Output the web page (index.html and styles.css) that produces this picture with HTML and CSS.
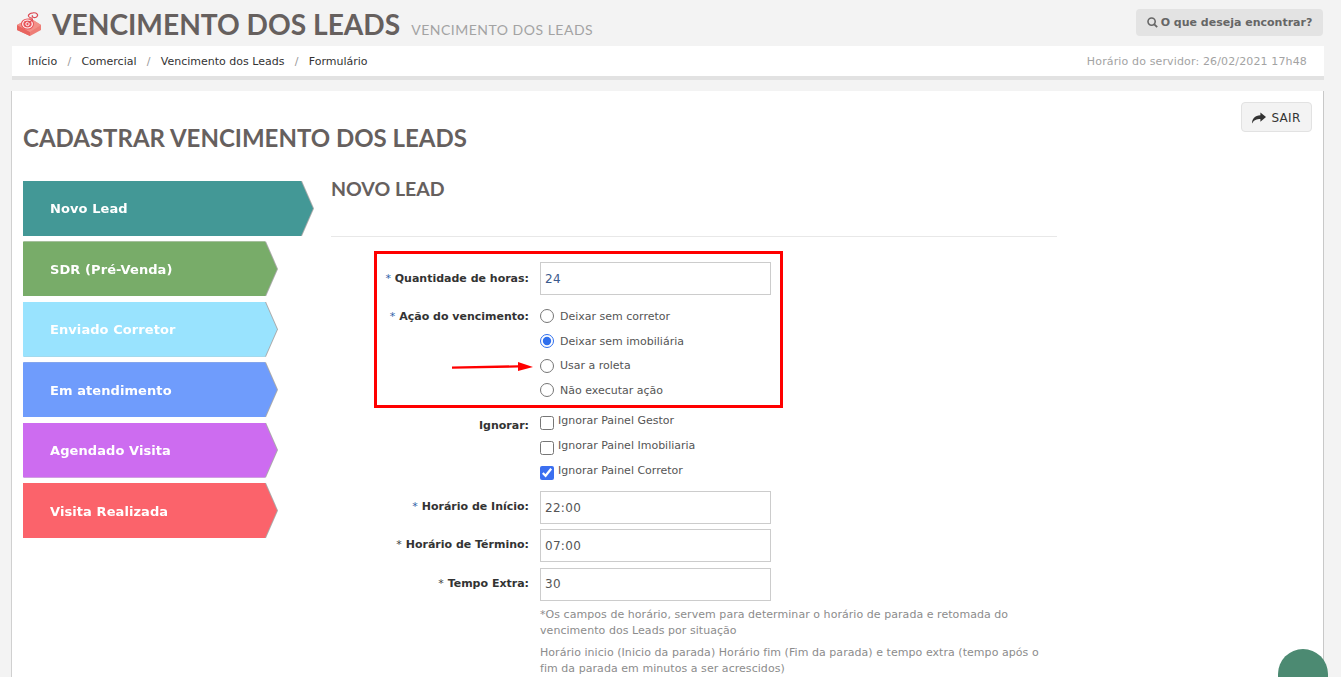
FILE: index.html
```html
<!DOCTYPE html>
<html lang="pt-BR">
<head>
<meta charset="utf-8">
<title>Vencimento dos Leads</title>
<link rel="stylesheet" href="styles.css">
</head>
<body>
<header class="top">
  <div class="title">
    <svg class="logo" width="24" height="24" viewBox="0 0 24 24">
      <path d="M0 13 L13 6 L24 13 L24 18 L13 24 L0 18 Z" fill="#ee7d76"/>
      <path d="M0 13 L13 20 L13 24 L0 18 Z" fill="#e8645f"/>
      <path d="M0 13 L13 6 L24 13 L13 20 Z" fill="#f29088"/>
      <ellipse cx="10.5" cy="12" rx="6.5" ry="5.6" fill="#e9545a"/>
      <ellipse cx="10.5" cy="12" rx="4.8" ry="4" fill="none" stroke="#fff" stroke-width="1.2"/>
      <circle cx="10.5" cy="12" r="1.7" fill="none" stroke="#fff" stroke-width="1"/>
      <path d="M11 10 C17 9 16 6 13 5.5 C10 4.5 11.5 1 16 .8 C20 .5 22 3 19.5 5 C17 6.4 14.5 5 15.5 3.2" fill="none" stroke="#dc4a54" stroke-width="1.2"/>
    </svg>
    <h1>VENCIMENTO DOS LEADS</h1>
    <span class="subtitle">VENCIMENTO DOS LEADS</span>
  </div>
  <button class="search" type="button">
    <svg width="11" height="11" viewBox="0 0 11 11"><circle cx="4.6" cy="4.6" r="3.6" fill="none" stroke="#666" stroke-width="1.6"/><path d="M7.3 7.3 L10.2 10.2" stroke="#666" stroke-width="1.8"/></svg>
    O que deseja encontrar?
  </button>
</header>

<nav class="crumbs">
  <ol>
    <li>Início</li><li class="sep">/</li><li>Comercial</li><li class="sep">/</li><li>Vencimento dos Leads</li><li class="sep">/</li><li>Formulário</li>
  </ol>
  <span class="clock">Horário do servidor: 26/02/2021 17h48</span>
</nav>

<main class="card">
  <button class="exit" type="button">
    <svg width="14" height="12" viewBox="0 0 15 12"><path d="M9 0 L15 5 L9 10 L9 7 C5 7 2 8 0 12 C0 7 3 3 9 3 Z" fill="#333"/></svg>
    SAIR
  </button>
  <h2>CADASTRAR VENCIMENTO DOS LEADS</h2>
  <div class="columns">
    <ul class="steps">
      <li class="step first c1"><span>Novo Lead</span></li>
      <li class="step c2"><span>SDR (Pré-Venda)</span></li>
      <li class="step c3"><span>Enviado Corretor</span></li>
      <li class="step c4"><span>Em atendimento</span></li>
      <li class="step c5"><span>Agendado Visita</span></li>
      <li class="step c6"><span>Visita Realizada</span></li>
    </ul>
    <section class="panel">
      <h3>NOVO LEAD</h3>
      <hr>
      <form class="form">
        <div class="row first-row">
          <label class="lab"><i>*</i> Quantidade de horas:</label>
          <div class="field"><input class="txt blue" type="text" value="24"></div>
        </div>
        <div class="row radios">
          <label class="lab"><i>*</i> Ação do vencimento:</label>
          <div class="opts">
            <label class="opt"><input type="radio" name="a"> Deixar sem corretor</label>
            <label class="opt"><input type="radio" name="a" checked> Deixar sem imobiliária</label>
            <label class="opt"><input type="radio" name="a"> Usar a roleta</label>
            <label class="opt"><input type="radio" name="a"> Não executar ação</label>
          </div>
        </div>
        <div class="row checks">
          <label class="lab">Ignorar:</label>
          <div class="opts">
            <label class="chk"><input type="checkbox"><span>Ignorar Painel Gestor</span></label>
            <label class="chk"><input type="checkbox"><span>Ignorar Painel Imobiliaria</span></label>
            <label class="chk"><input type="checkbox" checked><span>Ignorar Painel Corretor</span></label>
          </div>
        </div>
        <div class="row time">
          <label class="lab"><i>*</i> Horário de Início:</label>
          <div class="field"><input class="txt" type="text" value="22:00"></div>
        </div>
        <div class="row time">
          <label class="lab"><i class="dark">*</i> Horário de Término:</label>
          <div class="field"><input class="txt" type="text" value="07:00"></div>
        </div>
        <div class="row time">
          <label class="lab"><i class="dark">*</i> Tempo Extra:</label>
          <div class="field"><input class="txt" type="text" value="30"></div>
        </div>
        <div class="help">
          <p>*Os campos de horário, servem para determinar o horário de parada e retomada do vencimento dos Leads por situação</p>
          <p>Horário inicio (Inicio da parada) Horário fim (Fim da parada) e tempo extra (tempo após o fim da parada em minutos a ser acrescidos)</p>
        </div>
      </form>
    </section>
  </div>
</main>

<div class="redbox"></div>
<svg class="arrow" width="82" height="12" viewBox="0 0 82 12"><path d="M0 6.6 L66 5.4" stroke="#f00" stroke-width="2.4"/><path d="M66 1 L81 6 L66 10 Z" fill="#f00"/></svg>
<div class="fab"></div>
</body>
</html>
```
FILE: styles.css
```css
* { box-sizing: border-box; }
html, body { height: 677px; overflow: hidden; }
body {
  margin: 0;
  background: #f3f3f3;
  font-family: "DejaVu Sans", Verdana, sans-serif;
  font-size: 11px;
  color: #555;
  position: relative;
}
.top {
  height: 46px;
  display: flex;
  justify-content: space-between;
  padding: 9px 18px 0 17px;
}
.title { display: flex; align-items: baseline; }
.logo { align-self: flex-start; margin: 3px 0 0 0; }
h1 {
  margin: 0 0 0 11px;
  font: 700 28.15px/30px Lato, sans-serif;
  color: #66605e;
}
.subtitle {
  margin-left: 11px;
  font: 400 14px/20px Lato, sans-serif;
  letter-spacing: 0.5px;
  color: #a3a3a3;
}
.search {
  height: 27px;
  width: 187px;
  border: 0;
  border-radius: 4px;
  background: #e3e3e3;
  color: #666;
  font: 700 11px "DejaVu Sans", sans-serif;
  padding: 0;
  display: flex;
  align-items: center;
  justify-content: center;
  gap: 3px;
}
.crumbs {
  margin: 0 17px 0 12px;
  height: 34px;
  background: #fff;
  border-bottom: 4px solid #e2e2e2;
  display: flex;
  justify-content: space-between;
  align-items: center;
  padding: 1px 17px 0 16px;
}
.crumbs ol { list-style: none; display: flex; margin: 0; padding: 0; color: #333; font-size: 11px; }
.crumbs .sep { margin: 0 10.3px; color: #999; }
.clock { color: #a3a3a3; font-size: 11px; letter-spacing: 0.14px; }
.card {
  margin: 11px 17px 0 11px;
  height: 586px;
  background: #fff;
  border-left: 1px solid #d0d0d0;
  border-right: 1px solid #c8c8c8;
  padding: 32px 11px 0 11px;
  position: relative;
}
.exit {
  position: absolute;
  top: 11px;
  right: 11px;
  width: 71px;
  height: 30px;
  border: 1px solid #e2e2e2;
  border-radius: 4px;
  background: #f3f3f3;
  color: #333;
  font: 400 12px "DejaVu Sans", sans-serif;
  letter-spacing: 0.3px;
  display: flex;
  align-items: center;
  justify-content: center;
  gap: 5px;
  padding: 1px 0 0;
}
h2 {
  margin: 0;
  font: 700 24px/30px Lato, sans-serif;
  color: #66605e;
}
.columns { display: flex; margin-top: 28px; }
.steps { list-style: none; margin: 0; padding: 0; width: 308px; display: flex; flex-direction: column; gap: 5.4px; flex: none; }
.step {
  width: 254px;
  height: 55px;
  filter: drop-shadow(1px 0 0 #aaa);
}
.step.first { width: 290px; }
.step span {
  display: flex;
  align-items: center;
  height: 100%;
  padding-left: 27px;
  color: #fff;
  font-weight: 700;
  font-size: 13px;
  letter-spacing: 0.08px;
  clip-path: polygon(0 0, calc(100% - 12px) 0, 100% 50%, calc(100% - 12px) 100%, 0 100%);
}
.c1 span { background: #439896; }
.c2 span { background: #78ac69; padding-top: 1px; }
.c3 span { background: #99e3fe; }
.c4 span { background: #6f9cfc; padding-top: 1px; }
.c5 span { background: #cd6cf0; }
.c6 span { background: #fb636b; padding-top: 2px; }
.panel { width: 726px; }
h3 {
  margin: 0;
  font: 700 19.5px/16px Lato, sans-serif;
  color: #66605e;
}
hr { border: 0; border-top: 1px solid #e8e8e8; margin: 39px 0 0; }
.form { padding-top: 25px; }
.row { display: flex; }
.lab {
  width: 198px;
  flex: none;
  text-align: right;
  font-weight: 700;
  color: #333;
  font-size: 11px;
  margin-right: 11px;
}
.lab i { color: #2f5fa8; font-style: normal; font-weight: 400; }
.lab i.dark { color: #444; }
.txt {
  width: 231px;
  height: 33px;
  border: 1px solid #ccc;
  background: #fff;
  padding: 0 4px;
  font: 12px "DejaVu Sans", sans-serif;
  color: #555;
  letter-spacing: 0.3px;
  display: block;
}
.txt.blue { color: #3a5a8c; }
.first-row .lab { padding-top: 10px; }
.radios { margin-top: 9px; }
.radios .lab { padding-top: 6px; }
.opts { display: flex; flex-direction: column; }
.radios .opts { height: 98px; }
.opt { display: flex; align-items: center; height: 24.7px; flex: none; gap: 6px; }
.opt input { margin: 0; width: 14px; height: 14px; accent-color: #2f6fed; }
.checks { margin-top: 5px; }
.checks .lab { padding-top: 12px; }
.chk { display: flex; height: 25px; gap: 4px; align-items: flex-start; }
.chk input { margin: 9px 0 0; width: 14px; height: 14px; accent-color: #3b6ff0; }
.chk span { padding-top: 7px; }
.time { margin-top: 5.4px; }
.time .lab { padding-top: 9px; }
.checks + .time { margin-top: 9px; }
.help { margin: 6px 0 0 209px; width: 510px; color: #8c8c8c; line-height: 16px; letter-spacing: 0.05px; }
.help p { margin: 0 0 6px; }
.redbox {
  position: absolute;
  left: 374px;
  top: 251px;
  width: 409px;
  height: 157px;
  border: 3px solid #f00;
}
.arrow { position: absolute; left: 452px; top: 361px; }
.fab {
  position: absolute;
  left: 1278px;
  top: 649px;
  width: 50px;
  height: 28px;
  border-radius: 25px 25px 0 0;
  background: #4c8a72;
}
```
